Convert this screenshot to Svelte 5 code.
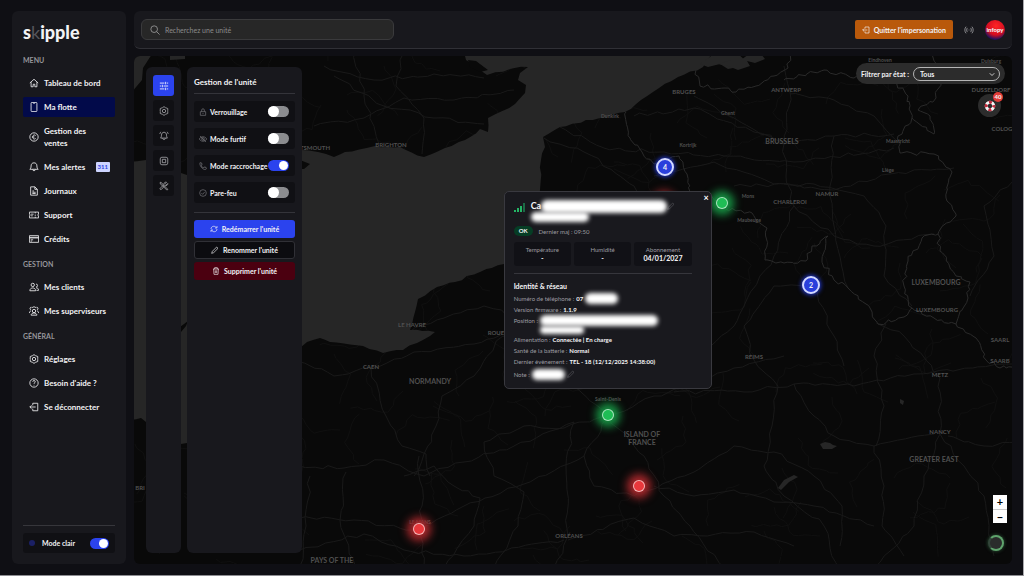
<script>
  const MAP_W = 878;
  const MAP_H = 508;

  let search = $state('');
  let filter = $state('Tous');
  let lightMode = $state(true);
  let current = $state('Ma flotte');
  let tab = $state('sliders');

  const icons = {
    home: 'M2 12 12 3l10 9M5 10v11h5v-6h4v6h5V10',
    phone: 'M7 1h10a2 2 0 0 1 2 2v18a2 2 0 0 1-2 2H7a2 2 0 0 1-2-2V3a2 2 0 0 1 2-2zM10 3h4',
    euro: 'M12 2a10 10 0 1 0 0 20 10 10 0 0 0 0-20zM16 8.500c-3-3-7-1-7 3.500s4 6.500 7 3.500M7 12h6',
    bell: 'M12 2c-4.500 0-7 3-7 7.500 0 4-1 6-3 8h20c-2-2-3-4-3-8C19 5 16.500 2 12 2zM9 18c0 4 6 4 6 0',
    file: 'M5 2h9l6 6v14H4V2zM14 2v6h6M8 12h4M8 15h8M8 18h8',
    ticket: 'M1 5h22v5a2 2 0 0 0 0 4v5H1v-5a2 2 0 0 0 0-4zM15 5v3M15 11v3M15 16v3M5 10h6M5 14h4',
    card: 'M1 4h22v16H1zM1 8h22M1 9.500h22M4 14h6M4 17h3',
    users: 'M9 3a4 4 0 1 0 0 8 4 4 0 0 0 0-8zM2 21c0-9 14-9 14 0zM17 5a3.500 3.500 0 1 1 0 7M17 14c4 0 6 2 6 6h-5',
    group: 'M12 8a4 4 0 1 0 0 8 4 4 0 0 0 0-8zM5 22c0-7 14-7 14 0zM6 3a3 3 0 0 0-1 6M18 3a3 3 0 0 1 1 6M1 17c0-4 2-5 4-5M23 17c0-4-2-5-4-5M7 5c1-4 9-4 10 0',
    gear: 'M12 1.500l3.500 2.500 5.500 2v5l1 1-1 1v5l-5.500 2-3.500 2.500L8.500 20 3 18v-5l-1-1 1-1V6l5.500-2zM12 8a4 4 0 1 0 0 8 4 4 0 0 0 0-8z',
    help: 'M12 2a10 10 0 1 0 0 20 10 10 0 0 0 0-20zM9 9c0-4 6-4 6 0 0 2-3 2.500-3 5M12 16.500v1.500',
    logout: 'M9 8V3h12v18H9v-5M16 12H2M6 8l-4 4 4 4',
    search: 'M10 2a8 8 0 1 0 0 16 8 8 0 0 0 0-16zM16 16l7 7',
    radio: 'M5 4c-4 4-4 12 0 16M8 7c-2 3-2 7 0 10M19 4c4 4 4 12 0 16M16 7c2 3 2 7 0 10M12 11v2',
    sliders: 'M2 5h11M19 5h3M16 2v6M2 12h3M11 12h11M8 9v6M2 19h11M19 19h3M16 16v6',
    alarm: 'M12 3c-4 0-6 3-6 7 0 3-1 5-2 7h16c-1-2-2-4-2-7 0-4-2-7-6-7zM9 17c0 5 6 5 6 0M2 7c0-2 1-4 3-5M22 7c0-2-1-4-3-5',
    chip: 'M7 3h10a4 4 0 0 1 4 4v10a4 4 0 0 1-4 4H7a4 4 0 0 1-4-4V7a4 4 0 0 1 4-4zM8 8h8v8H8z',
    tools: 'M3 3l3 1 3 4 12 12-2 2L7 10 3 7zM21 6a5 5 0 0 1-7 5L6 20c-2 2-5-1-3-3l9-8c-1-4 2-7 6-6l-3 3 3 3z',
    lock: 'M4 11h16v11H4zM8 11V6c0-5 8-5 8 0v5M12 15v3',
    hidden: 'M1 12C5 3 19 3 23 12 19 21 5 21 1 12zM12 8a4 4 0 1 0 0 8 4 4 0 0 0 0-8zM3 3l18 18',
    call: 'M3 2l5 1 1 6-3 2c2 3 4 5 7 7l2-3 6 1 1 5c-2 3-7 2-12-2S1 6 3 2z',
    shield: 'M12 2a10 10 0 1 0 0 20 10 10 0 0 0 0-20zM7 12l4 4 6-7',
    refresh: 'M3 12c0-9 12-11 16-4M21 3v6h-6M21 12c0 9-12 11-16 4M3 21v-6h6',
    pencil: 'M2 22l2-6L17 3l4 4L8 20z',
    trash: 'M3 6h18M8 6V2h8v4M5 6l1 16h12l1-16M10 10v8M14 10v8'
  };

  const menu = [
    {
      title: 'MENU',
      items: [
        { label: 'Tableau de bord', icon: 'home' },
        { label: 'Ma flotte', icon: 'phone' },
        { label: 'Gestion des ventes', icon: 'euro' },
        { label: 'Mes alertes', icon: 'bell', badge: 311 },
        { label: 'Journaux', icon: 'file' },
        { label: 'Support', icon: 'ticket' },
        { label: 'Crédits', icon: 'card' }
      ]
    },
    {
      title: 'GESTION',
      items: [
        { label: 'Mes clients', icon: 'users' },
        { label: 'Mes superviseurs', icon: 'group' }
      ]
    },
    {
      title: 'GÉNÉRAL',
      items: [
        { label: 'Réglages', icon: 'gear' },
        { label: "Besoin d'aide ?", icon: 'help' },
        { label: 'Se déconnecter', icon: 'logout' }
      ]
    }
  ];

  const tabs = [
    { icon: 'sliders', label: 'Commandes' },
    { icon: 'gear', label: 'Paramètres' },
    { icon: 'alarm', label: 'Alarmes' },
    { icon: 'chip', label: 'Matériel' },
    { icon: 'tools', label: 'Outils' }
  ];

  let modes = $state([
    { label: 'Verrouillage', icon: 'lock', on: false },
    { label: 'Mode furtif', icon: 'hidden', on: false },
    { label: 'Mode raccrochage', icon: 'call', on: true },
    { label: 'Pare-feu', icon: 'shield', on: false }
  ]);

  const pins = [
    { x: 531, y: 111, kind: 'cluster', count: 4 },
    { x: 677, y: 229, kind: 'cluster', count: 2 },
    { x: 530, y: 147, kind: 'red' },
    { x: 588, y: 147, kind: 'green' },
    { x: 474, y: 359, kind: 'green' },
    { x: 505, y: 430, kind: 'red' },
    { x: 285, y: 473, kind: 'red' }
  ];

  const labels = [
    [257, 91, 'BRIGHTON', 6], [181, 94, 'TSMOUTH', 6], [550, 38, 'BRUGES', 6], [652, 36, 'ANTWERP', 6],
    [594, 59, 'Ghent', 5], [476, 62, 'Dunkirk', 5], [554, 91, 'Kortrijk', 5], [648, 88, 'BRUSSELS', 7],
    [764, 87, 'Maastricht', 5], [754, 116, 'Liège', 5], [693, 140, 'NAMUR', 6], [656, 148, 'CHARLEROI', 6],
    [614, 142, 'Mons', 5], [615, 166, 'Maubeuge', 5], [746, 6, 'Eindhoven', 5], [857, 7, 'Duisburg', 5],
    [857, 36, 'DUSSELDORF', 6], [868, 75, 'COLOG', 6], [802, 229, 'LUXEMBOURG', 7], [803, 256, 'LUXEMBOURG', 6],
    [866, 286, 'SAARL', 6], [866, 307, 'SAARB', 6], [806, 321, 'METZ', 6], [806, 378, 'NANCY', 6],
    [800, 406, 'GREATER EAST', 7], [620, 303, 'REIMS', 6], [508, 381, 'ISLAND OF', 7], [508, 389, 'FRANCE', 7],
    [474, 345, 'Saint-Denis', 5], [435, 482, 'ORLÉANS', 6], [278, 271, 'LE HAVRE', 6], [362, 279, 'ROUE', 6],
    [237, 313, 'CAEN', 6], [296, 328, 'NORMANDY', 7], [286, 468, 'LE MANS', 5], [198, 507, 'PAYS OF THE', 7],
    [6, 434, 'BRI', 6]
  ];

  const sea = [
    [-4, 106], [12, 104], [47, 117], [53, 119], [106, 104], [168, 94], [184, 96], [200, 101], [211, 96], [241, 90],
    [266, 91], [290, 101], [311, 92], [331, 84], [346, 73], [354, 76], [354, 62], [381, 48], [391, 37], [392, 29],
    [384, 24], [386, 17], [394, 11], [376, 13], [353, 19], [346, 14], [332, 4], [330, -4], [580, -4], [569, 11],
    [544, 21], [519, 36], [491, 56], [466, 62], [426, 71], [409, 81], [411, 91], [407, 104], [406, 134], [402, 159],
    [391, 184], [370, 208], [346, 216], [321, 226], [303, 231], [284, 243], [281, 256], [276, 274], [301, 276],
    [296, 280], [283, 287], [269, 294], [249, 297], [229, 290], [196, 286], [186, 282], [173, 286], [166, 292],
    [110, 280], [70, 300], [53, 387], [47, 388], [12, 366], [7, 362], [-4, 364]
  ];

  const borders = [
    [[492, 56], [496, 82], [508, 96], [520, 108], [545, 100], [553, 118], [556, 136], [574, 138], [590, 152], [618, 157], [633, 172], [631, 204], [650, 207], [672, 205], [678, 190], [694, 180], [688, 204], [700, 224], [714, 232], [732, 248], [744, 268], [770, 261], [778, 252]],
    [[778, 252], [770, 230], [774, 205], [788, 182], [804, 178], [806, 195], [822, 220], [836, 226], [834, 242], [822, 268], [800, 262], [778, 252]],
    [[822, 268], [842, 282], [852, 304], [866, 312], [884, 309]],
    [[804, 178], [822, 160], [812, 142], [818, 116], [800, 98], [766, 97], [764, 80], [778, 62], [774, 40], [760, 24], [742, 20]],
    [[778, 62], [800, 78], [796, 60], [784, 54], [802, 42], [808, 22], [796, -4]],
    [[562, 14], [566, 30], [590, 32], [602, 36], [622, 30], [640, 20], [654, 12], [656, -4]],
    [[650, 24], [690, 14], [720, 22], [742, 20]]
  ];

  const roads = [
    [[200, 20], [250, 50], [300, 62], [350, 68]],
    [[190, 10], [240, 24], [300, 18], [350, 22]],
    [[220, -4], [230, 40], [245, 88]],
    [[270, -4], [262, 30], [290, 62], [288, 98]],
    [[180, 70], [230, 62], [270, 42], [320, 44], [380, 34]],
    [[410, 82], [450, 96], [500, 130], [520, 160]],
    [[426, 71], [470, 92], [530, 96], [590, 100], [660, 106], [760, 92]],
    [[500, 60], [560, 52], [620, 76], [650, 88], [700, 80], [760, 78]],
    [[560, 40], [600, 62], [650, 88], [656, 36], [650, 10]],
    [[650, 88], [652, 120], [660, 150], [640, 200]],
    [[520, 120], [580, 106], [640, 128], [700, 134], [756, 118], [820, 112]],
    [[600, 130], [680, 128], [730, 140], [752, 170], [750, 220], [778, 250]],
    [[660, 150], [700, 180], [740, 190], [800, 178]],
    [[656, 38], [700, 44], [740, 60], [764, 86]],
    [[700, 80], [696, 130], [700, 170], [714, 232]],
    [[166, 306], [200, 320], [237, 312], [280, 296], [340, 288], [369, 278]],
    [[237, 312], [252, 360], [268, 390], [292, 398], [296, 420]],
    [[276, 276], [310, 262], [350, 250], [390, 262]],
    [[369, 280], [340, 320], [308, 340], [302, 370], [280, 420]],
    [[369, 280], [410, 300], [440, 330], [474, 360]],
    [[166, 410], [210, 412], [250, 404], [290, 420], [330, 406], [380, 390], [440, 366]],
    [[176, 420], [172, 470], [166, 510]],
    [[166, 462], [220, 464], [280, 474], [330, 450], [390, 428], [450, 400]],
    [[212, 416], [206, 464], [222, 512]],
    [[270, 420], [300, 410], [320, 430], [346, 442], [340, 470], [310, 512]],
    [[285, 400], [288, 450], [286, 470], [290, 512]],
    [[350, 386], [390, 370], [430, 372], [470, 360]],
    [[350, 386], [360, 420], [390, 436], [384, 470], [360, 512]],
    [[440, 366], [432, 410], [434, 480], [420, 512]],
    [[474, 360], [450, 400], [460, 430], [500, 440], [560, 416]],
    [[474, 360], [510, 400], [530, 440], [556, 470], [590, 512]],
    [[474, 360], [520, 340], [556, 330], [600, 312], [650, 300]],
    [[540, 336], [610, 336], [660, 328], [720, 330], [780, 318], [878, 308]],
    [[620, 304], [644, 330], [638, 370], [630, 410], [650, 440], [690, 470], [704, 512]],
    [[660, 328], [680, 360], [700, 380], [740, 390], [800, 378]],
    [[560, 416], [600, 390], [640, 396], [680, 420], [708, 450], [706, 490]],
    [[740, 390], [750, 430], [748, 470], [770, 500]],
    [[520, 430], [560, 440], [600, 434], [640, 446], [680, 450], [740, 470]],
    [[806, 322], [806, 378], [830, 410], [850, 440], [860, 500]],
    [[806, 378], [790, 420], [780, 470], [740, 512]],
    [[806, 322], [770, 280], [744, 268]],
    [[620, 304], [610, 270], [640, 230], [680, 232], [700, 280], [710, 310]],
    [[556, 330], [560, 300], [600, 270], [610, 250], [640, 200]],
    [[752, 268], [740, 300], [750, 350], [742, 390]],
    [[166, 494], [230, 478], [270, 494], [330, 500], [430, 484]],
    [[434, 484], [500, 462], [540, 480], [620, 476], [660, 490]],
    [[814, 380], [850, 390], [884, 386]],
    [[836, 240], [860, 200], [850, 150], [884, 120]]
  ];

  // breaks long segments into small wobbly ones, same result on every render
  function rough(points, step, amp, close = false) {
    let seed = points.length * 13 + points[0][0];
    const rand = () => {
      seed = (seed * 16807 + 11) % 2147483647;
      return (seed / 2147483647 - 0.5) * 2 * amp;
    };
    let d = `M${points[0][0]} ${points[0][1]}`;
    for (let i = 1; i < points.length; i++) {
      const [x1, y1] = points[i - 1];
      const [x2, y2] = points[i];
      const n = Math.max(1, Math.round(Math.hypot(x2 - x1, y2 - y1) / step));
      for (let k = 1; k <= n; k++) {
        const end = k === n;
        const x = x1 + ((x2 - x1) * k) / n + (end ? 0 : rand());
        const y = y1 + ((y2 - y1) * k) / n + (end ? 0 : rand());
        d += `L${x.toFixed(1)} ${y.toFixed(1)}`;
      }
    }
    return close ? d + 'Z' : d;
  }

  const lanes = [];
  for (let i = 0; i < 190; i++) {
    const x = (i * 137) % MAP_W;
    const y = (i * 89 + (i % 7) * 31) % MAP_H;
    const a = i * 1.7;
    lanes.push([[x, y], [x + Math.cos(a) * 26, y + Math.sin(a) * 26], [x + Math.cos(a + 0.6) * 56, y + Math.sin(a + 0.6) * 50]]);
  }
</script>

{#snippet icon(name)}
  <svg class="icon" viewBox="0 0 24 24" aria-hidden="true"><path d={icons[name]} /></svg>
{/snippet}

<div class="app">
  <aside>
    <div class="logo">s<span>k</span>ipple</div>

    <nav>
      {#each menu as group}
        <h2>{group.title}</h2>
        <ul>
          {#each group.items as item}
            <li>
              <a href="#top" class:active={current === item.label} onclick={() => (current = item.label)}>
                {@render icon(item.icon)}
                <span class="label">{item.label}</span>
                {#if item.badge}<span class="badge">{item.badge}</span>{/if}
              </a>
            </li>
          {/each}
        </ul>
      {/each}
    </nav>

    <div class="theme">
      <label>
        <i class="dot"></i>
        <span>Mode clair</span>
        <input type="checkbox" class="switch" bind:checked={lightMode} />
      </label>
    </div>
  </aside>

  <main>
    <header>
      <label class="search">
        {@render icon('search')}
        <input type="search" placeholder="Recherchez une unité" aria-label="Recherchez une unité" bind:value={search} />
      </label>
      <div class="actions">
        <button class="quit">{@render icon('logout')}Quitter l'impersonation</button>
        <span class="live">{@render icon('radio')}</span>
        <button class="avatar">infopy</button>
      </div>
    </header>

    <div class="map">
      <svg class="tiles" viewBox="0 0 {MAP_W} {MAP_H}" preserveAspectRatio="xMidYMid slice" aria-hidden="true">
        <g class="lanes">
          {#each lanes as lane}<path d={rough(lane, 6, 2)} />{/each}
        </g>
        <g class="roads">
          {#each roads as road}<path d={rough(road, 8, 2)} />{/each}
        </g>
        <g class="borders">
          {#each borders as border}<path d={rough(border, 4, 2)} />{/each}
        </g>
        <g class="water">
          <path d={rough(sea, 7, 1, true)} />
          <path d="M-2-2h20l-9 14-1 12-10 12z" />
          <path d="M36-2h15v5l-15 1z" />
          <path d="M580-2l-14 10 8 3 12-3 8 5 10-2 8-6-8-7z" />
          <path d="M584 8l10 2 10 4 12-4-3-5 8 2 10-4-4-5h-12l-8 6-10 0z" />
          <path d="M686 388l5-2 5 1 3 2 4 1-5 3-9 0zM644 432l6-8 10-5 4 2-9 5-8 8zM766 343l4 2-1 4-3-2z" />
        </g>
        <path class="land" d="M166 104l10 4-6 5h-4zM334 4l8 1 12 9-8 2-10-5zM46 271l8-6-2 5-5 6z" />
        <g class="places">
          {#each labels as [x, y, text, size]}
            <text {x} {y} font-size={size}>{text}</text>
          {/each}
        </g>
      </svg>

      {#each pins as pin}
        <button
          class="pin {pin.kind}"
          style="left: {(pin.x / MAP_W) * 100}%; top: {(pin.y / MAP_H) * 100}%"
          aria-label="Unité"
        >{pin.count ?? ''}</button>
      {/each}

      <article class="popup">
        <button class="close" aria-label="Fermer">×</button>
        <div class="head">
          <svg class="signal" viewBox="0 0 12 10" aria-hidden="true">
            <path d="M0 7h2v2H0zM3 5h2v4H3zM6 3h2v6H6z" />
            <path class="weak" d="M9 0h2v9H9z" />
          </svg>
          <div class="name">
            <div class="line"><h3>Ca</h3><span class="mask title"></span>{@render icon('pencil')}</div>
            <span class="mask sub"></span>
          </div>
        </div>
        <div class="status"><b>OK</b><span>Dernier maj : 09:50</span></div>
        <dl class="stats">
          <div><dt>Température</dt><dd>-</dd></div>
          <div><dt>Humidité</dt><dd>-</dd></div>
          <div><dt>Abonnement</dt><dd>04/01/2027</dd></div>
        </dl>
        <h4>Identité &amp; réseau</h4>
        <ul class="info">
          <li>Numéro de téléphone : <b>07</b><span class="mask small"></span></li>
          <li>Version firmware : <b>1.1.9</b></li>
          <li class="place">Position : <span><span class="mask long"></span><span class="mask mid"></span></span></li>
          <li>Alimentation : <b>Connectée | En charge</b></li>
          <li>Santé de la batterie : <b>Normal</b></li>
          <li>Dernier évènement : <b>TEL - 18 (12/12/2025 14:38:00)</b></li>
          <li class="note">Note : <span class="mask small"></span>{@render icon('pencil')}</li>
        </ul>
      </article>

      <div class="panels">
        <div class="tabs">
          {#each tabs as t}
            <button class:active={tab === t.icon} aria-label={t.label} onclick={() => (tab = t.icon)}>
              {@render icon(t.icon)}
            </button>
          {/each}
        </div>
        <section class="unit">
          <h3>Gestion de l'unité</h3>
          <div class="modes">
            {#each modes as mode}
              <label>
                {@render icon(mode.icon)}
                <span>{mode.label}</span>
                <input type="checkbox" class="switch" bind:checked={mode.on} />
              </label>
            {/each}
          </div>
          <div class="buttons">
            <button class="restart">{@render icon('refresh')}Redémarrer l'unité</button>
            <button class="rename">{@render icon('pencil')}Renommer l'unité</button>
            <button class="delete">{@render icon('trash')}Supprimer l'unité</button>
          </div>
        </section>
      </div>

      <div class="controls">
        <div class="filter">
          <label for="state">Filtrer par état :</label>
          <div class="select">
            <select id="state" bind:value={filter}>
              <option>Tous</option>
              <option>En ligne</option>
              <option>Hors ligne</option>
            </select>
            <svg viewBox="0 0 8 8" aria-hidden="true"><path d="M1 3l3 3 3-3" /></svg>
          </div>
        </div>
        <button class="rescue" aria-label="Alertes">
          <svg viewBox="0 0 16 16" aria-hidden="true">
            <circle cx="8" cy="8" r="5" stroke="#f4f4f4" stroke-width="4" />
            <circle cx="8" cy="8" r="5" stroke="#c22a3c" stroke-width="4" stroke-dasharray="3.900 3.950" stroke-dashoffset="2" />
          </svg>
          <span>40</span>
        </button>
        <div class="zoom">
          <button>+</button>
          <button>−</button>
        </div>
        <div class="ring"></div>
      </div>
    </div>
  </main>
</div>

<style>
  :global(body) {
    background: #0f0f14;
    color: #f2f2f4;
    font-family: Lato, "Liberation Sans", sans-serif;
    font-size: 7px;
  }

  * {
    box-sizing: border-box;
  }

  button, input, select {
    font: inherit;
    color: inherit;
    margin: 0;
  }

  button {
    padding: 0;
    border: 0;
    cursor: pointer;
  }

  ul, dl, dd, h2, h3, h4 {
    margin: 0;
    padding: 0;
    list-style: none;
  }

  .app {
    display: flex;
    gap: 8px;
    min-height: 100vh;
    padding: 11px 11px 11px 12px;
    border-right: 1px solid #a9a9ad;
    border-bottom: 1px solid #8d8d92;
  }

  .icon {
    flex: none;
    width: 10px;
    height: 10px;
    fill: none;
    stroke: currentColor;
    stroke-width: 2;
  }

  aside {
    display: flex;
    flex-direction: column;
    flex: none;
    width: 114px;
    padding: 11px;
    background: #18181d;
    border-radius: 6px;
  }

  .logo {
    font-size: 18px;
    line-height: 20px;
    font-weight: 900;
  }

  .logo span {
    color: #55555b;
    font-weight: 400;
  }

  h2 {
    margin-top: 11px;
    font-size: 7px;
    line-height: 8px;
    color: #96969b;
  }

  h2:first-child {
    margin-top: 14px;
  }

  nav ul {
    display: flex;
    flex-direction: column;
    gap: 4px;
    margin-top: 9px;
  }

  nav a {
    display: flex;
    align-items: center;
    gap: 5px;
    padding: 4px 5px 4px 6px;
    color: inherit;
    font-size: 8px;
    line-height: 12px;
    font-weight: 700;
    text-decoration: none;
  }

  nav a .label {
    max-width: 66px;
  }

  nav a.active {
    background: #020a4a;
    border-radius: 2px;
  }

  .badge {
    margin-left: auto;
    padding: 0 2px;
    font-size: 6px;
    line-height: 10px;
    background: #cdd4ff;
    color: #2b3fe0;
    border-radius: 1px;
  }

  .theme {
    margin-top: auto;
    padding-top: 7px;
    border-top: 1px solid #36363b;
  }

  .theme label {
    display: flex;
    align-items: center;
    height: 20px;
    padding: 0 6px;
    background: #101014;
    border-radius: 3px;
    font-weight: 700;
  }

  .dot {
    width: 6px;
    height: 6px;
    margin-right: 7px;
    border-radius: 50%;
    background: #1b2065;
  }

  .switch {
    appearance: none;
    flex: none;
    display: flex;
    width: 21px;
    height: 11px;
    margin-left: auto;
    background: #8b8c8f;
    border-radius: 6px;
  }

  .theme .switch {
    width: 19px;
  }

  .switch::before {
    content: '';
    width: 11px;
    height: 11px;
    border-radius: 50%;
    background: #fff;
  }

  .switch:checked {
    justify-content: flex-end;
    padding: 1px;
    background: #2b43ee;
  }

  .switch:checked::before {
    width: 9px;
    height: 9px;
  }

  main {
    display: flex;
    flex-direction: column;
    flex: 1;
    gap: 7px;
    min-width: 0;
  }

  header {
    display: flex;
    align-items: center;
    justify-content: space-between;
    height: 38px;
    padding: 0 7px;
    background: #18181d;
    border-bottom: 1px solid #303036;
    border-radius: 6px;
  }

  .search {
    display: flex;
    align-items: center;
    gap: 5px;
    width: 253px;
    height: 21px;
    padding: 0 8px;
    background: #272727;
    border: 1px solid #3a3a3c;
    border-radius: 6px;
    color: #9b9b9b;
  }

  .search input {
    flex: 1;
    padding: 0;
    background: none;
    border: 0;
    outline: 0;
  }

  .search input::placeholder {
    color: #8b8b8b;
  }

  .actions {
    display: flex;
    align-items: center;
    gap: 10px;
  }

  .quit {
    display: flex;
    align-items: center;
    gap: 4px;
    height: 19px;
    padding: 0 7px;
    background: #b9590b;
    border-radius: 2px;
    font-weight: 700;
  }

  .quit .icon {
    width: 8px;
    height: 8px;
  }

  .live {
    display: flex;
    padding: 0 1px;
    color: #9c9ca0;
  }

  .avatar {
    width: 20px;
    height: 20px;
    border-radius: 50%;
    background: radial-gradient(circle at 55% 30%, #ff2424, #d40d20 50%, #20115e 75%);
    font-size: 6px;
    font-weight: 900;
  }

  .map {
    position: relative;
    display: flex;
    justify-content: space-between;
    flex: 1;
    padding: 11px 11px 11px 12px;
    overflow: hidden;
    background: #090909;
    border-radius: 6px;
  }

  .tiles {
    position: absolute;
    inset: 0;
    width: 100%;
    height: 100%;
    fill: none;
  }

  .lanes {
    stroke: #101010;
  }

  .roads {
    stroke: #191919;
  }

  .borders {
    stroke: #2a2a2a;
  }

  .water {
    fill: #262626;
  }

  .land {
    fill: #090909;
  }

  .places {
    fill: #505050;
    text-anchor: middle;
    font-weight: 700;
  }

  .pin {
    position: absolute;
    width: 12px;
    height: 12px;
    margin: -6px;
    border: 1px solid #ffffffa0;
    border-radius: 50%;
  }

  .cluster {
    width: 18px;
    height: 18px;
    margin: -9px;
    border: 2px solid #d3d9ff;
    background: #2a3fdc;
    box-shadow: 0 0 4px 1px #2238d0;
    font-weight: 700;
  }

  .green {
    background: #1fbd55;
    box-shadow: 0 0 8px 6px #179243;
  }

  .red {
    background: #e8383c;
    box-shadow: 0 0 8px 6px #a8282c;
  }

  .popup {
    position: absolute;
    left: 42.1%;
    top: 135px;
    width: 208px;
    padding: 8px 19px 7px 9px;
    background: #19191e;
    border: 1px solid #39393f;
    border-radius: 5px;
    font-size: 6px;
    color: #9c9ca1;
  }

  .popup b, .popup dd, .popup h3, .popup h4 {
    color: #f5f5f7;
    font-weight: 700;
  }

  .close {
    position: absolute;
    top: 1px;
    right: 2px;
    background: none;
    color: #fff;
    font-size: 9px;
    line-height: 9px;
    font-weight: 700;
  }

  .head {
    display: flex;
    gap: 5px;
  }

  .signal {
    width: 12px;
    height: 10px;
    margin-top: 3px;
    fill: #24b465;
  }

  .signal .weak {
    fill: #1c6b45;
  }

  .line {
    display: flex;
    align-items: center;
    height: 12px;
  }

  .popup h3 {
    font-size: 9px;
    line-height: 12px;
  }

  .mask {
    display: inline-block;
    background: #fff;
    border-radius: 6px;
    filter: blur(2px);
  }

  .mask.title {
    width: 126px;
    height: 13px;
  }

  .mask.sub {
    display: block;
    width: 58px;
    height: 10px;
  }

  .mask.small {
    width: 33px;
    height: 11px;
  }

  .mask.long {
    display: block;
    width: 118px;
    height: 11px;
  }

  .mask.mid {
    display: block;
    width: 44px;
    height: 8px;
  }

  .popup .icon {
    width: 8px;
    height: 8px;
    color: #55555b;
  }

  .status {
    display: flex;
    align-items: center;
    gap: 6px;
    margin-top: 4px;
  }

  .status b {
    padding: 0 5px;
    line-height: 10px;
    background: #063d25;
    border-radius: 5px;
  }

  .stats {
    display: grid;
    grid-template-columns: repeat(3, 1fr);
    gap: 3px;
    margin-top: 6px;
    padding-bottom: 7px;
    border-bottom: 1px solid #36363c;
  }

  .stats div {
    padding: 4px 0;
    background: #111116;
    border-radius: 3px;
    text-align: center;
    line-height: 8px;
  }

  .stats dd {
    font-size: 7px;
  }

  h4 {
    margin-top: 8px;
    font-size: 7px;
    line-height: 9px;
  }

  .info {
    margin-top: 2px;
  }

  .info li {
    display: flex;
    align-items: center;
    gap: 2px;
    height: 11px;
    line-height: 11px;
    white-space: nowrap;
  }

  .info .place {
    align-items: flex-start;
    height: 19px;
  }

  .info .note {
    height: 14px;
  }

  .panels {
    position: relative;
    display: flex;
    gap: 6px;
  }

  .tabs {
    display: flex;
    flex-direction: column;
    gap: 4px;
    padding: 8px 7px;
    background: #18181d;
    border-radius: 6px;
  }

  .tabs button {
    display: flex;
    align-items: center;
    justify-content: center;
    width: 21px;
    height: 21px;
    background: #101014;
    border-radius: 3px;
    color: #a2a2a6;
  }

  .tabs .active {
    background: #2b43ee;
    color: #fff;
  }

  .unit {
    width: 115px;
    padding: 8px 7px;
    background: #18181d;
    border-radius: 6px;
  }

  .unit h3 {
    padding-bottom: 4px;
    border-bottom: 1px solid #34343a;
    font-size: 8px;
    line-height: 14px;
  }

  .modes {
    display: flex;
    flex-direction: column;
    gap: 6px;
    padding: 7px 0 9px;
    border-bottom: 1px solid #34343a;
  }

  .modes label {
    display: flex;
    align-items: center;
    height: 21px;
    padding: 0 6px 0 5px;
    background: #101014;
    border-radius: 3px;
    font-weight: 700;
  }

  .modes span {
    width: 0;
    margin-left: 3px;
    white-space: nowrap;
  }

  .modes .icon, .buttons .icon {
    width: 8px;
    height: 8px;
  }

  .modes .icon {
    color: #77777c;
  }

  .buttons {
    display: flex;
    flex-direction: column;
    gap: 3px;
    padding-top: 7px;
  }

  .buttons button {
    display: flex;
    align-items: center;
    justify-content: center;
    gap: 4px;
    height: 18px;
    border-radius: 3px;
    font-weight: 700;
  }

  .buttons .restart {
    background: #2b43ee;
  }

  .buttons .rename {
    background: #0c0c10;
    border: 1px solid #303036;
  }

  .buttons .delete {
    background: #4b0010;
  }

  .controls {
    position: relative;
    display: flex;
    flex-direction: column;
    align-items: flex-end;
    margin: -4px -6px 0 0;
  }

  .filter {
    display: flex;
    align-items: center;
    gap: 4px;
    height: 21px;
    margin-right: 2px;
    padding: 0 5px;
    background: #2c2c2c;
    border-radius: 11px;
    font-weight: 700;
  }

  .select {
    display: flex;
    align-items: center;
    width: 87px;
    height: 14px;
    padding: 0 4px 0 6px;
    border: 1px solid #b5b5b5;
    border-radius: 7px;
  }

  select {
    appearance: none;
    flex: 1;
    padding: 0;
    background: none;
    border: 0;
    outline: 0;
  }

  .select svg {
    width: 6px;
    height: 6px;
    fill: none;
    stroke: #fff;
  }

  .rescue {
    display: flex;
    align-items: center;
    justify-content: center;
    position: relative;
    width: 23px;
    height: 23px;
    margin: 10px 6px 0 0;
    background: #2c2c2c;
    border-radius: 50%;
  }

  .rescue svg {
    width: 12px;
    height: 12px;
    fill: none;
  }

  .rescue span {
    position: absolute;
    top: -2px;
    right: -2px;
    width: 10px;
    font-size: 6px;
    line-height: 10px;
    font-weight: 700;
    background: #e23c37;
    border-radius: 50%;
  }

  .zoom {
    display: flex;
    flex-direction: column;
    margin-top: auto;
  }

  .zoom button {
    width: 14px;
    height: 14px;
    background: #fff;
    color: #000;
    font-size: 11px;
    line-height: 12px;
    font-weight: 700;
  }

  .zoom button + button {
    border-top: 1px solid #ccc;
  }

  .ring {
    width: 16px;
    height: 16px;
    margin: 12px 3px 2px 0;
    background: #2a2c2b;
    border: 2px solid #5fa36c;
    border-left-color: #33453a;
    border-radius: 50%;
    box-shadow: 0 0 3px 1px #1f3a27;
  }
</style>
